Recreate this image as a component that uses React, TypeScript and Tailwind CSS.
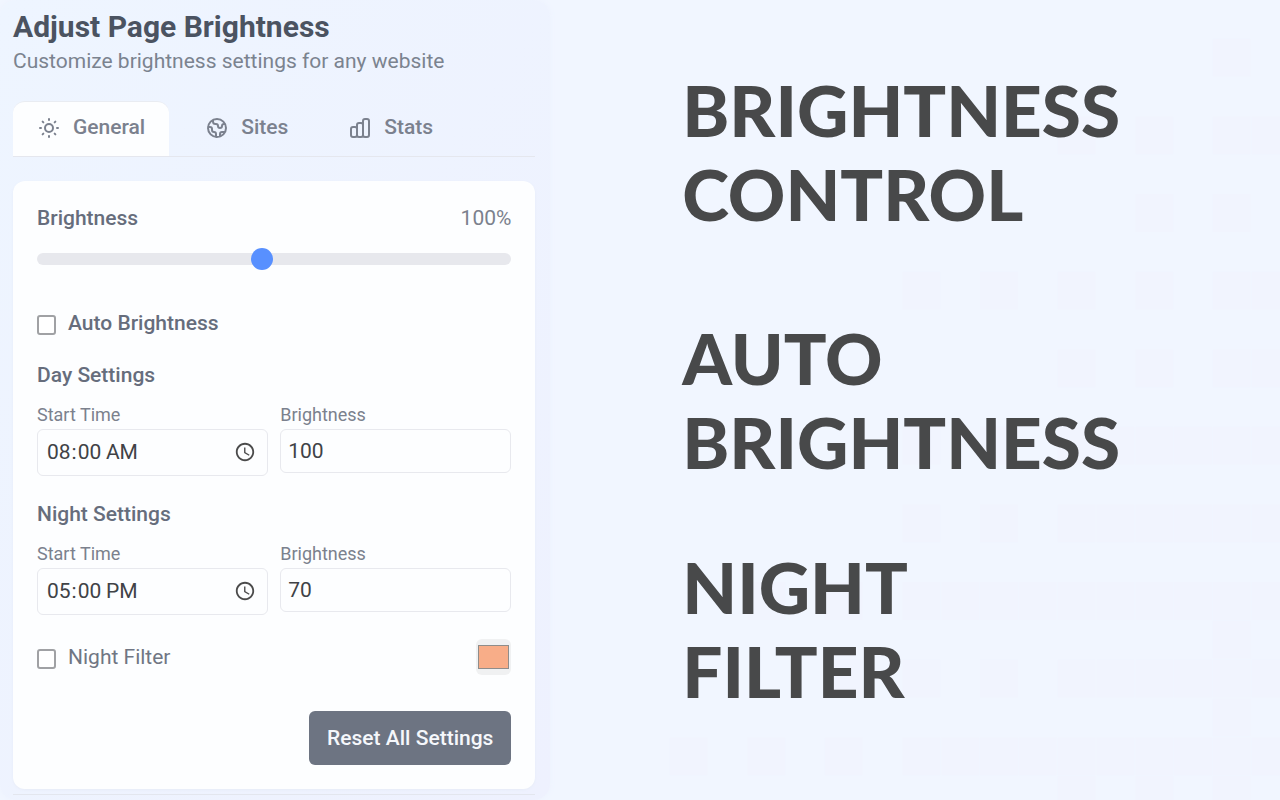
import React from 'react'
import { HiOutlineChartBar, HiOutlineGlobe, HiOutlineSun } from 'react-icons/hi'

type Period = { start: string, brightness: number }

const tabs = [
  { id: 'general', label: 'General', Icon: HiOutlineSun },
  { id: 'sites', label: 'Sites', Icon: HiOutlineGlobe },
  { id: 'stats', label: 'Stats', Icon: HiOutlineChartBar },
]

const features = [
  { lines: ['BRIGHTNESS', 'CONTROL'], space: 'mb-20' },
  { lines: ['AUTO', 'BRIGHTNESS'], space: 'mb-[61px]' },
  { lines: ['NIGHT', 'FILTER'], space: '' },
]

// faint tiles behind the headings: row -> filled columns
const tiles: Record<number, number[]> = {
  1: [31],
  3: [27, 29, 31, 32],
  5: [29, 31],
  7: [23, 25, 27, 29, 31, 32],
  9: [27, 29, 31, 32],
  11: [23, 25, 27, 28, 29, 30, 31, 32],
  13: [23, 25, 27, 28, 29, 30, 31, 32],
  15: [19, 21, 23, 24, 25, 26, 27, 28, 29, 30, 31, 32],
  16: [31],
  17: [21, 23, 25, 27, 28, 29, 30, 31, 32],
  18: [31],
  19: [17, 19, 21, 23, 24, 25, 26, 27, 28, 29, 30, 31, 32],
  20: [27, 29, 31],
}

function Backdrop() {
  return (
    <svg className="absolute inset-0 -z-10 h-full w-full" viewBox="0 0 1280 800" preserveAspectRatio="xMaxYMax slice" aria-hidden="true">
      {Object.entries(tiles).map(([row, cols]) => cols.map(col => (
        <rect key={`${row}-${col}`} x={10 + col * 38.8} y={Number(row) * 38.8} width="38" height="38" fill="#f1f4fe" />
      )))}
    </svg>
  )
}

function PeriodFields({ name, value, onChange }: { name: string, value: Period, onChange: (p: Period) => void }) {
  const id = name.toLowerCase()
  return (
    <fieldset className="mt-6">
      <legend className="mb-3 text-[21px]/7 font-medium text-[#666d7c]">{name} Settings</legend>
      <div className="grid grid-cols-2 items-start gap-3">
        <div>
          <label htmlFor={`${id}-start`} className="block text-lg/7 text-[#7b818d]">Start Time</label>
          <input
            id={`${id}-start`}
            type="time"
            value={value.start}
            onChange={e => onChange({ ...value, start: e.target.value })}
            className="h-[47px] w-full rounded-md border border-[#e8e9ee] px-2 text-[21px] text-[#404246] [&::-webkit-calendar-picker-indicator]:opacity-70"
          />
        </div>
        <div>
          <label htmlFor={`${id}-brightness`} className="block text-lg/7 text-[#7b818d]">Brightness</label>
          <input
            id={`${id}-brightness`}
            type="number"
            value={value.brightness}
            onChange={e => onChange({ ...value, brightness: Number(e.target.value) })}
            className="h-11 w-full rounded-md border border-[#e8e9ee] px-[7px] text-[21px] text-[#404246]"
          />
        </div>
      </div>
    </fieldset>
  )
}

const checkbox = 'mt-1 h-5 w-[19px] appearance-none rounded-[3px] border-2 border-[#a0a1a4] bg-white checked:bg-[#5890ff]'

export default function App() {
  const [tab, setTab] = React.useState('general')
  const [brightness, setBrightness] = React.useState(100)
  const [auto, setAuto] = React.useState(false)
  const [filter, setFilter] = React.useState(false)
  const [color, setColor] = React.useState('#f8ad88')
  const [day, setDay] = React.useState<Period>({ start: '08:00', brightness: 100 })
  const [night, setNight] = React.useState<Period>({ start: '17:00', brightness: 70 })

  const reset = () => {
    setBrightness(100)
    setAuto(false)
    setFilter(false)
    setColor('#f8ad88')
    setDay({ start: '08:00', brightness: 100 })
    setNight({ start: '17:00', brightness: 70 })
  }

  return (
    <div className="relative isolate flex min-h-screen bg-[#f1f6ff] font-[Roboto,sans-serif]">
      <Backdrop />
      <main className="w-[43%] rounded-2xl bg-gradient-to-br from-[#eef5ff] to-[#eef1fe] pt-[9px] pr-[15px] pb-1 pl-[13px] shadow-[0_0_6px_#edf2fd]">
        <h1 className="text-3xl/9 font-bold text-[#4b5361]">Adjust Page Brightness</h1>
        <p className="mt-0.5 text-[21px]/7 text-[#7b838f]">Customize brightness settings for any website</p>

        <div role="tablist" className="mt-[26px] flex gap-3 border-b border-[#e5e7ee]">
          {tabs.map(({ id, label, Icon }) => (
            <button
              key={id}
              role="tab"
              aria-selected={tab === id}
              onClick={() => setTab(id)}
              className={`flex h-[55px] items-center gap-3 rounded-t-xl border-t px-6 pb-0.5 text-[21px] font-medium text-[#7b818e] ${tab === id ? 'border-[#e9ecf2] bg-[#fdfeff]' : 'border-transparent'}`}
            >
              <Icon className="size-6" />
              {label}
            </button>
          ))}
        </div>

        <section className="mt-6 rounded-xl bg-[#fdfeff] px-6 pt-[23px] pb-6 shadow-sm shadow-[#e8edf8]">
          <div className="flex justify-between text-[21px]/7">
            <label htmlFor="brightness" className="font-medium text-[#666d7c]">Brightness</label>
            <output htmlFor="brightness" className="text-[#7b818d]">{brightness}%</output>
          </div>
          <input
            id="brightness"
            type="range"
            min={10}
            max={200}
            value={brightness}
            onChange={e => setBrightness(Number(e.target.value))}
            className="mt-[21px] block h-3 w-full appearance-none rounded-full bg-[#e7e8ed] [&::-webkit-slider-thumb]:size-[22px] [&::-webkit-slider-thumb]:appearance-none [&::-webkit-slider-thumb]:rounded-full [&::-webkit-slider-thumb]:bg-[#5890ff]"
          />

          <label className="mt-11 flex items-center gap-3 text-[21px]/7 font-medium text-[#666d7c]">
            <input type="checkbox" checked={auto} onChange={e => setAuto(e.target.checked)} className={checkbox} />
            Auto Brightness
          </label>

          <PeriodFields name="Day" value={day} onChange={setDay} />
          <PeriodFields name="Night" value={night} onChange={setNight} />

          <div className="mt-6 flex items-center justify-between">
            <label className="flex items-center gap-3 text-[21px]/7 text-[#707683]">
              <input type="checkbox" checked={filter} onChange={e => setFilter(e.target.checked)} className={checkbox} />
              Night Filter
            </label>
            <input
              type="color"
              aria-label="Night filter color"
              value={color}
              onChange={e => setColor(e.target.value)}
              className="h-9 w-[35px] appearance-none rounded-md bg-[#f0f1f2] px-0.5 py-1.5 [&::-webkit-color-swatch]:border [&::-webkit-color-swatch]:border-[#8f8d8b] [&::-webkit-color-swatch-wrapper]:p-0"
            />
          </div>

          <div className="mt-9 flex justify-end">
            <button onClick={reset} className="rounded-md bg-[#6d7482] px-[18px] py-[13px] text-[21px]/7 font-medium text-[#f5f7fb]">
              Reset All Settings
            </button>
          </div>
        </section>
        <hr className="mt-[5px] border-[#e3e6ee]" />
      </main>

      <aside className="flex-1 pt-[68px] pl-[10.3%] font-[Lato,sans-serif] text-[71px]/[84px] font-black text-[#48494a]">
        {features.map(f => (
          <h2 key={f.lines.join(' ')} className={f.space}>
            {f.lines.map(line => <span key={line} className="block">{line}</span>)}
          </h2>
        ))}
      </aside>
    </div>
  )
}
